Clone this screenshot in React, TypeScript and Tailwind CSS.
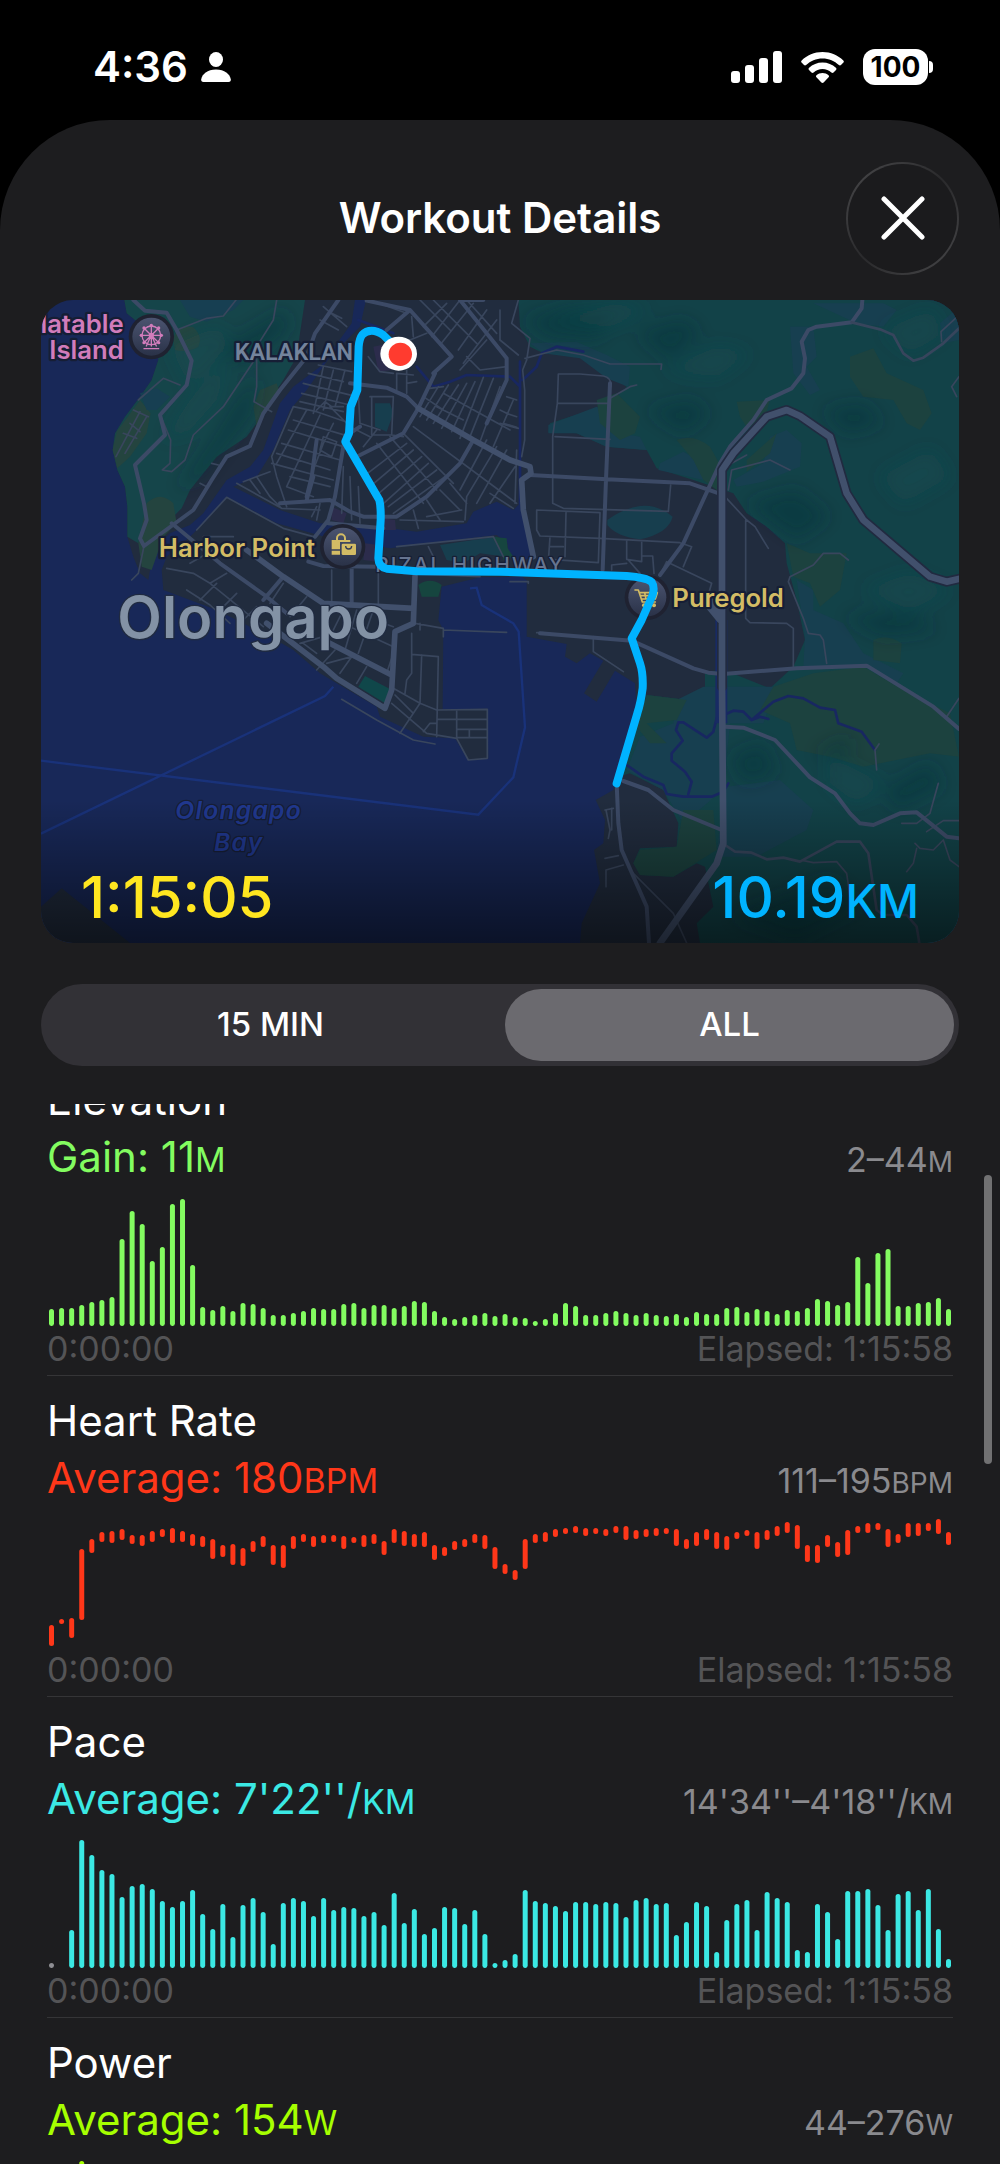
import React, { useState } from 'react'
import clsx from 'clsx'

type Bar = [top: number, bottom: number]

const CHART_HEIGHT = 128

const fromHeights = (heights: number[]): Bar[] => heights.map((h) => [CHART_HEIGHT - h, CHART_HEIGHT])

const elevation = fromHeights([
  17, 18, 18, 21, 24, 26, 29, 87, 115, 102, 65, 79, 122, 127, 61, 19, 16, 20, 15, 23, 22, 18, 11, 11, 13, 15, 18, 17,
  17, 22, 23, 18, 21, 21, 18, 20, 25, 24, 15, 9, 7, 9, 11, 13, 10, 12, 9, 8, 5, 7, 13, 23, 20, 11, 11, 13, 15, 13, 11,
  13, 11, 10, 12, 9, 14, 12, 12, 18, 19, 14, 17, 15, 12, 16, 15, 18, 27, 25, 21, 24, 69, 43, 73, 77, 20, 20, 23, 24,
  28, 17,
])

const heartRate: Bar[] = [
  [106, 127], [100, 105], [99, 119], [30, 101], [20, 34], [13, 23], [12, 24], [10, 21], [16, 25], [16, 27],
  [12, 23], [10, 18], [9, 24], [12, 23], [15, 27], [17, 28], [20, 40], [26, 38], [25, 46], [29, 47],
  [22, 33], [17, 28], [26, 46], [26, 49], [17, 30], [15, 23], [17, 28], [16, 24], [16, 23], [17, 30],
  [18, 24], [16, 28], [15, 25], [22, 36], [10, 24], [12, 27], [15, 28], [13, 28], [26, 41], [28, 37],
  [22, 31], [20, 28], [15, 24], [16, 30], [28, 50], [45, 55], [51, 61], [20, 50], [15, 24], [13, 23],
  [10, 18], [9, 15], [7, 14], [9, 17], [9, 15], [10, 17], [7, 14], [7, 21], [11, 20], [10, 18],
  [9, 17], [9, 15], [10, 27], [20, 30], [13, 27], [10, 21], [13, 30], [17, 31], [13, 20], [11, 17],
  [13, 30], [11, 21], [7, 17], [3, 14], [6, 30], [26, 43], [26, 44], [16, 28], [23, 38], [11, 36],
  [7, 14], [4, 14], [4, 11], [10, 28], [15, 24], [4, 18], [4, 17], [4, 12], [0, 15], [13, 26],
]

const pace = fromHeights([
  5, 0, 38, 128, 113, 98, 94, 71, 82, 84, 79, 67, 61, 67, 78, 54, 39, 64, 31, 63, 70, 56, 24, 65, 70, 67, 52, 70, 58,
  61, 60, 52, 56, 43, 75, 45, 59, 34, 40, 61, 60, 44, 58, 34, 5, 8, 14, 78, 67, 65, 62, 57, 66, 66, 64, 66, 65, 51,
  68, 70, 64, 65, 33, 46, 66, 62, 16, 48, 64, 68, 38, 76, 70, 66, 18, 16, 64, 56, 29, 77, 77, 79, 63, 38, 74, 77, 58,
  79, 39, 9,
])

const power = fromHeights([
  5, 0, 44, 128, 110, 96, 92, 74, 80, 82, 78, 66, 62, 66, 76, 56, 42, 62, 36, 62, 68, 56, 28, 64, 68, 66, 54, 68, 58,
  60, 60, 52, 56, 44, 72, 46, 58, 36, 42, 60, 60, 46, 58, 36, 6, 8, 16, 76, 66, 64, 62, 58, 66, 66, 64, 66, 64, 52,
  66, 68, 64, 64, 36, 48, 66, 62, 18, 48, 64, 66, 40, 74, 68, 66, 20, 18, 64, 56, 32, 76, 76, 78, 62, 40, 72, 76, 58,
  78, 40, 10,
])

const metrics = [
  { title: 'Elevation', label: 'Gain:', value: '11', unit: 'M', range: '2–44', text: 'text-[#83fc60]', stroke: 'stroke-[#83fc60]', bars: elevation },
  { title: 'Heart Rate', label: 'Average:', value: '180', unit: 'BPM', range: '111–195', text: 'text-[#ff3719]', stroke: 'stroke-[#ff3719]', bars: heartRate },
  { title: 'Pace', label: 'Average:', value: "7'22''/", unit: 'KM', range: "14'34''–4'18''/", text: 'text-[#3be9e4]', stroke: 'stroke-[#3be9e4]', bars: pace, mutedFirst: true },
  { title: 'Power', label: 'Average:', value: '154', unit: 'W', range: '44–276', text: 'text-[#a6ff00]', stroke: 'stroke-[#a6ff00]', bars: power, mutedFirst: true },
]

const StatusBar = () => (
  <div className="flex h-[120px] shrink-0 items-start justify-between pl-[93px] pr-[67px] pt-[40px]">
    <div className="flex h-[54px] items-center gap-[13px]">
      <span className="text-[42px] font-semibold leading-[54px]">4:36</span>
      <svg className="h-[30px] w-[30px]" viewBox="0 0 30 30" fill="currentColor">
        <ellipse cx="15" cy="7.5" rx="7" ry="7.5" />
        <path d="M2.5 30C.8 30 0 29 .2 27.500C1 22 6.500 17.500 15 17.500S29 22 29.800 27.500C30 29 29.200 30 27.500 30Z" />
      </svg>
    </div>
    <div className="flex h-[54px] items-center gap-[19px]">
      <svg className="h-[32px] w-[51px]" viewBox="0 0 51 32" fill="currentColor">
        <rect x="0" y="20" width="9" height="12" rx="3" />
        <rect x="14" y="14" width="9" height="18" rx="3" />
        <rect x="28" y="7" width="9" height="25" rx="3" />
        <rect x="42" y="0" width="9" height="32" rx="3" />
      </svg>
      <svg className="h-[31px] w-[43px]" viewBox="0 0 43 31" fill="currentColor">
        <path d="M21.500 0C29.700 0 37 3.200 42.300 8.400c.7.7.7 1.500.1 2.200l-2.400 2.500c-.6.6-1.500.6-2.100 0C33.600 9 27.900 6.500 21.500 6.500S9.400 9 5.100 13.100c-.6.6-1.500.6-2.100 0L.6 10.600c-.6-.7-.6-1.500.1-2.200C6 3.200 13.300 0 21.500 0Z" />
        <path d="M21.500 10.500c5.200 0 9.900 2 13.400 5.300.7.7.7 1.500.1 2.200l-2.500 2.500c-.6.6-1.400.6-2.100.1-2.400-2.200-5.500-3.500-8.900-3.500s-6.500 1.300-8.900 3.500c-.7.500-1.500.5-2.100-.1L8 18c-.6-.7-.6-1.500.1-2.200 3.500-3.300 8.200-5.300 13.400-5.300Z" />
        <path d="M21.500 21c2.300 0 4.400.8 6 2.200.7.6.7 1.400.1 2.100l-5 5.200c-.6.6-1.600.6-2.200 0l-5-5.200c-.6-.7-.6-1.500.1-2.100 1.600-1.400 3.700-2.200 6-2.200Z" />
      </svg>
      <div className="flex items-center gap-px">
        <div className="flex h-[36px] w-[65px] items-center justify-center rounded-[12px] bg-white text-[28px] font-bold text-black">
          100
        </div>
        <div className="h-[12px] w-[4px] rounded-r-full bg-white" />
      </div>
    </div>
  </div>
)

const Terrain = () => (
  <>
    {/* west headland and its hills */}
    <path className="fill-[#212c3e]" d="M283 30L290 70 340 110 380 160 385 210 365 270 330 320 285 380 255 430 248 480 262 540 285 590 292 650 292 740 310 800 330 850 355 870 362 830 360 790 420 730 480 705 520 670 590 570 660 530 700 480 750 340 790 290 870 230 965 100 975 30Z" />
    <path className="fill-[#15454a]" d="M283 30L290 70 340 110 380 160 385 210 365 270 330 320 285 380 255 430 248 480 262 540 285 590 292 650 292 740 325 760 345 700 420 690 455 655 480 600 560 500 650 440 680 400 720 330 760 270 800 200 810 130 825 30Z" />
    <path className="fill-[#24443f]" d="M330 330L362 370 350 430 300 500 262 535 248 480 260 425ZM350 640Q390 600 430 640L440 700 400 740 365 840 335 830 325 760ZM430 150Q440 100 490 112 520 140 505 170 470 190 435 180ZM690 300L740 280 750 310 700 370 680 410 670 350Z" />
    <path className="fill-[#173f52]" d="M330 310L380 295 420 320 380 360 350 360ZM450 30L640 30 610 60 530 95 480 80Z" />

    {/* downtown grid north of the river */}
    <path className="fill-[#212c3e]" d="M1008 30L990 110 900 200 830 300 780 360 730 480 680 560 610 590 750 660 870 700 1080 715 1160 725 1310 700 1330 665 1400 635 1450 660 1470 640 1490 700 1510 800 1430 830 1490 870 1490 1040 1610 1062 1605 1100 1640 1120 1680 1090 1720 1112 1662 1210 1700 1235 1755 1142 1815 1180 1820 1260 1750 1500 1697 1530 1725 1590 1720 1660 1692 1680 1710 1780 1655 1900 1650 1959 2787 1959 2787 30Z" />
    {/* south town and piers */}
    <path className="fill-[#212c3e]" d="M590 620L740 700 900 745 1080 775 1400 735 1432 760 1435 800 1500 830 1500 860 1350 862 1235 890 1225 990 1240 1020 1238 1258 1372 1256 1375 1405 1315 1410 1275 1345 1180 1340 1050 1280 1040 1250 920 1180 870 1150 790 1080 720 1040 560 960 400 900 395 840 410 800 480 740 530 690Z" />
    <path className="fill-[#212c3e]" d="M33 1850L95 1795 300 1959 33 1959Z" />
    <path className="fill-[#173e4e]" d="M1035 340L1080 340 1090 370 1070 425 1035 410ZM1230 765L1330 750 1400 740 1430 770 1425 800 1350 790 1300 820 1250 810Z" />
    <path className="fill-[#16453f]" d="M1165 885Q1200 860 1235 885L1225 920 1175 920ZM1385 740L1430 745 1435 795 1415 790ZM1410 745L1430 770 1450 800 1420 810Z" />
    <path className="fill-[#10474a]" d="M1005 1158L1080 1197 1065 1240 985 1190Z" />
    <path className="fill-[#2c2c4c]" d="M905 650L950 670 940 700 905 690ZM1060 685L1095 690 1098 720 1060 720ZM1005 760L1045 765 1040 815 1000 810ZM1030 170L1080 160 1085 240 1045 245Z" />

    {/* eastern hills */}
    <path className="fill-[#124248]" d="M1465 30L1470 110 1500 170 1540 190 1650 200 1790 290 1740 340 1700 355 1560 400 1555 425 1640 430 1730 470 1850 480 1880 535 1990 570 2110 610 2150 670 2210 710 2265 760 2270 820 2300 930 2325 1050 2290 1130 2220 1195 2120 1155 2080 1140 2025 1145 2025 1200 1975 1230 1850 1215 1830 1280 1765 1460 1800 1450 1900 1500 1945 1600 1940 1670 1830 1675 1810 1720 1830 1755 1930 1760 2000 1720 2025 1730 2050 1850 2000 1900 2010 1959 2787 1959 2787 30Z" />
    <path className="fill-[#173f50]" d="M1500 160L1640 155 1730 195 1800 230 1795 290 1730 265 1650 205 1540 190ZM1555 405L1700 350 1740 370 1770 430 1830 440 1850 480 1730 470 1640 430 1555 430ZM1890 520L1960 485 2020 520 2020 570 1885 540ZM2110 570L2200 520 2220 440 2270 420 2315 460 2310 530 2200 575 2120 590ZM2280 110L2350 110 2360 200 2330 230 2370 300 2340 315 2290 250ZM1940 1230L2020 1190 2240 1190 2200 1300 2100 1300 2060 1700 2180 1700 2330 1620 2350 1560 2250 1470 2090 1490 1960 1600 1900 1500 1790 1440 1830 1340 1930 1300ZM2300 870L2350 900 2350 960 2440 1000 2500 1090 2620 1150 2600 1180 2510 1130 2320 1130 2325 1040ZM2350 40L2560 40 2600 60 2560 110 2480 100ZM2730 100L2787 50 2787 150 2740 160Z" />
    <path className="fill-[#1c423f]" d="M1700 330L1760 310 1830 380 1815 430 1770 450 1710 400ZM1940 450Q1990 430 2040 470L2090 560 2060 600 2020 570 1990 510ZM2120 335L2220 330 2200 400 2150 410 2130 380ZM2150 510L2240 430 2220 490 2150 545ZM2460 200L2530 175 2570 250 2680 300 2705 370 2670 420 2630 400 2590 330 2500 320 2460 260ZM2270 760L2340 790 2450 790 2430 900 2370 950 2340 880 2290 860ZM2230 1190L2350 1150 2500 1130 2620 1200 2760 1270 2787 1400 2700 1390 2500 1430 2400 1400 2300 1380 2280 1300 2190 1260ZM1850 1215L1970 1230 1940 1290 1850 1300 1910 1360 1860 1360 1820 1310ZM1830 1680L1940 1670 1960 1560 2050 1560 2060 1680 1930 1760 1830 1755 1810 1720ZM2530 1050Q2570 1030 2615 1060L2610 1120 2530 1110Z" />
    <path className="fill-[#173e4e]" d="M1732 690Q1780 655 1830 648T1928 680Q1915 730 1830 748 1760 740 1732 705Z" />
    <g filter="url(#relief)">
      <path className="fill-[#0d3339]" fillOpacity=".4" d="M1480 90L1620 50 1760 70 1700 150 1560 140ZM1820 130L1960 90 2010 130 1920 210ZM1850 360L1980 330 2040 370 1960 430ZM2380 360L2500 340 2560 400 2450 430ZM2150 640L2300 600 2400 680 2300 750ZM2440 980L2640 960 2720 1020 2560 1040ZM2350 1390L2460 1340 2450 1410ZM2100 1400L2200 1360 2240 1450 2140 1480ZM2560 1500L2700 1420 2740 1490 2600 1560ZM560 430L640 300 690 260 660 380 520 560 440 600ZM560 180L760 60 780 110 640 230ZM2100 1880L2400 1760 2500 1850 2300 1950Z" />
      <path className="fill-[#175053]" fillOpacity=".35" d="M1560 90L1760 40 1860 60 1740 110ZM1900 240L2060 170 2160 190 2060 260ZM2550 560L2700 480 2760 560 2620 640ZM400 450L480 330 600 200 560 330 480 420ZM420 170L560 110 600 160 480 290ZM2500 900L2640 850 2760 900 2640 960ZM2400 1400L2560 1480 2480 1540 2400 1480ZM2560 120L2700 60 2740 130 2640 190Z" />
    </g>

    {/* rivers and canals */}
    <g fill="none" className="stroke-[#182761]" strokeWidth="8" strokeLinejoin="round" strokeLinecap="round">
      <path d="M1470 215V640M1478 270L1520 230 1535 190 1580 170 1660 185M985 90L1090 130M1160 230L1210 290 1260 275 1310 255 1440 260 1470 290" />
      <path d="M1790 1425L1840 1460 1900 1485 1910 1512 1960 1520 2045 1520 2080 1505 2095 1480M1975 1512L1985 1475 1965 1445 1925 1412V1390L1958 1352 1938 1320 1945 1297H1960L2030 1343 2050 1325 2060 1285 2110 1262 2140 1265 2165 1290 2230 1235 2275 1218 2320 1225 2370 1253 2415 1260 2425 1300 2495 1325 2535 1380M2165 1290L2190 1280 2215 1287" />
    </g>
    <path className="stroke-[#182b64]" strokeWidth="36" strokeLinejoin="round" fill="none" d="M2074 990V1300" />
  </>
)

const Roads = () => (
  <g fill="none" strokeLinejoin="round" strokeLinecap="round">
    <g className="stroke-[#39465d]" strokeWidth="5">
      {/* headland tracks */}
      <path d="M440 120L530 85 580 78 618 30M740 30L730 90 680 170 680 290 672 335 725 365M680 200L580 350 490 435 465 510 425 545 397 540 420 520 422 450 395 385M325 330L400 265 450 285M330 365L258 500M350 380L285 490M310 360L355 380M300 400L330 425M280 430L320 445M510 580L530 590M545 520L565 525M342 768L325 850 305 870" />
      {/* north of the river */}
      <path d="M880 50L950 110M905 70L935 85M870 90L925 120M835 250L940 275M820 280L980 320M815 310L960 345M810 335L940 365M880 230L850 370M910 240L880 360M945 240L915 350M865 225L965 245M790 350L725 500 740 560 770 650M790 350L860 365 960 400M830 360L740 520M870 375L770 590M900 350L960 410M860 360L885 335 905 350 940 350M790 390L960 440M775 420L940 470M755 460L930 510M740 490L900 540M725 520L910 570M780 560L900 590M770 590L850 620M910 400L880 460 850 540M880 440L920 455 905 500 870 480ZM640 575L720 545M620 580L755 655 870 660M680 560L720 620 750 650M660 570L690 610M860 650L845 680M870 640L860 690M940 530L935 670M960 560L965 690M985 590L990 700" />
      <path d="M1020 30L1130 70M1170 30L1260 120M1210 30L1340 160M1250 40L1180 110M1290 30L1205 140M1330 40L1230 165M1370 60L1285 180M1400 90L1300 220M1410 60V150M1310 30L1400 130M1145 80L1150 140M1190 130L1140 150M1290 240L1370 150M1310 200L1350 240 1430 230M1100 250V300M1130 240V310M1100 250L1150 255M1130 280L1160 275M1015 200L1050 245 1090 250M1020 320H1090L1085 435H1025V320M985 310L990 400 1050 420M1000 470L1040 420M960 410L1020 440M1085 435L1120 440M1200 295L1240 290M1180 320L1240 360M1225 290L1170 380M1255 285L1190 390M1285 285L1210 400M1310 280L1235 415M1335 275L1265 425M1360 262L1290 445M1390 265L1320 440M1410 290L1350 455M1450 330L1390 470M1240 310L1440 420M1220 350L1300 390M1430 370L1460 380M1420 400L1460 412M1150 410L1460 640M1130 460L1000 560M1150 480L1020 590M1175 500L1035 620M1195 520L1050 650M1220 540L1075 650M1245 560L1090 670M1040 460L1180 640M1080 440L1220 600M1120 430L1270 580M1400 470L1310 620M1430 480L1340 640M1455 530L1380 640M1370 450L1290 600M1310 620L1305 690M1260 580L1310 640M1230 600L1290 660M1190 630L1230 690M1150 660L1165 715M1110 690L1300 695M1295 660L1190 680M1460 480L1455 640M1380 610L1450 655" />
      {/* south town */}
      <path d="M500 720L590 622 760 715 850 740M410 835L490 850 540 880 700 1010M480 820L550 780M520 740H610M540 880L590 850M510 930L560 880M470 900L540 945 600 1000M560 970L620 910M620 1010L680 950M905 840V940M1045 840V950M1100 770L1390 740 1420 800M1195 770L1210 800M1120 850L1350 860M930 800L935 830M760 880L720 940M830 920L780 980M940 960L900 1040M980 960L945 1080M1030 960L985 1090M1060 1000L1090 1010M960 1010L1090 1070M820 1060L860 1090M880 1040L810 1060M915 1080L860 1140M965 1100L890 1120M965 1100L930 1150M1010 1130L980 1180M1090 1090L1070 1150M1145 1030V1150L1130 1170 1125 1210M1175 1095L1170 1240M1145 1093L1225 1100 1220 1340M1090 1195L1170 1240 1220 1260M1095 1215L1150 1270M1170 1240L1110 1330M1085 1240L1190 1330 1280 1345M1220 1260L1372 1258V1405L1315 1410 1280 1345V1260M1222 1288H1372M1280 1318H1372M1280 1343H1372M1318 1318V1343M1220 1300H1200L1180 1325M1155 1000L1240 1015M935 1228L1040 1290 1150 1350 1215 1362M1240 1020L1430 1027M1170 1000V1020M1240 1018V1040" />
      {/* east side blocks */}
      <path d="M1465 30L1445 100 1500 145 1490 210 1478 240 1484 300V450L1475 500M1485 205L1580 180 1660 195 1740 222 1895 222 1893 238M1410 150L1465 195M1585 252H1650L1720 258Q1745 262 1743 290M1585 252L1582 340 1568 440V640L1600 655 1915 664 1922 585M1582 340H1740M1575 440L1740 448M1740 325L1800 290 1820 285M1520 660L1710 668 1705 818 1560 808M1520 660V720L1530 738 1710 745 1950 758 1985 770 1960 830M1608 668L1605 800M1560 740L1556 800M1558 770H1600M1790 750V808L1835 815V755M1835 798H1868L1872 850M1745 840V825L1790 820M1795 810L1830 850M1890 855L1910 815 2045 880 2030 930M2065 615L2085 620 2150 690 2175 710 2215 775M2147 690V985L2160 998 2270 1000 2290 1015V1130M2095 600L2105 540 2220 510 2280 540M2105 520L2150 495M2455 810L2430 790H2380L2350 825 2280 860 2275 875 2320 985 2335 1030 2370 1035 2380 1050 2390 1120M2735 155L2733 125 2787 75M2787 260L2765 290 2780 320M1690 1040V1085L1780 1145M1430 320L1460 330M1410 360L1430 370M1410 400L1465 415M1540 1028H1520M1440 875H1495V880" />
      {/* southern trails */}
      <path d="M1800 1740L1930 1870 1970 1959M1725 1560L1750 1555M1728 1560L1740 1620 1735 1645M1745 1555V1620M1725 1705L1765 1697M1728 1790V1740L1780 1725M2320 1712L2350 1718 2420 1715 2450 1750 2460 1820M2750 1280L2787 1225M2725 1480L2700 1570 2660 1600 2615 1600M2690 1625L2740 1592H2787M2655 1660L2670 1675 2710 1680 2740 1650 2760 1710 2787 1730M2660 1675L2650 1720 2630 1745M2535 1380L2540 1440M2535 1380L2547 1362" />
    </g>
    <g className="stroke-[#3c4a66]" strokeWidth="12">
      <path d="M310 30L345 62 410 68 440 120 485 212 470 285 390 375 405 435 315 525 328 580 342 640 350 690 330 745 342 768 490 660 545 570 590 500 660 468 700 370 750 300 830 200 855 130 925 30" />
      <path d="M425 700L570 820 710 920 770 970M855 740L895 690 915 620 935 500 945 440 990 410M895 700L1060 715M750 640L900 630 960 665 1000 680 1100 680 1190 620 1290 520 1330 450M1130 320L1165 355 1120 430 980 500M960 280L1070 293 1130 320M835 815L880 828 1045 830M965 830V945M760 860L700 930M850 560L830 630M860 450L845 560 830 620" />
      <path d="M1210 250L1265 200 1140 60 1010 32M1140 60L1070 120M1360 30L1290 30 1430 205 1430 270 1370 400M1165 355L1215 250" />
      <path d="M1500 555L1730 568 1980 580 2060 608M1740 280L1728 568 1718 840M1890 855L1960 760 2070 520 2100 470 2170 390 2210 330 2285 295 2320 250 2325 205 2315 155 2335 120 2360 110 2465 97 2495 55 2497 30" />
      <path d="M1530 1030L1805 1052 1990 1135 2035 1148 2080 1152 2300 1135 2510 1127 2710 1250 2787 1317M2085 1310L2140 1313 2235 1350 2340 1462 2415 1510 2460 1570 2490 1600 2530 1605 2610 1570 2660 1567 2750 1640 2787 1645M1780 1473L1855 1500 1930 1560 2075 1620M1760 1480L1765 1600 1775 1680 1850 1850 1857 1959" />
    </g>
    <g className="stroke-[#37455c]" strokeWidth="8">
      <path d="M2465 97L2550 118 2590 135 2620 190 2650 212 2680 203 2740 160 2787 115M2085 1665L2115 1685 2165 1688 2210 1708 2260 1703 2310 1715 2420 1655 2490 1655 2515 1690 2540 1860 2560 1875 2630 1875 2660 1910 2668 1959" />
    </g>
    <g className="stroke-[#41506c]" strokeWidth="17">
      <path d="M1165 355L1330 450 1440 510 1500 530 1503 550 1475 570 1480 660 1510 800M650 780L760 860 880 940 1150 955M1155 860L1150 1000 1095 1025 1085 1200 1065 1255 920 1165 880 1130 710 1000M880 1050L1085 1155" />
      <path className="stroke-[#212a40]" strokeWidth="30" d="M2076 1190V540L2110 490 2210 380 2270 360 2310 378 2400 440 2450 610 2500 690 2700 860 2750 875 2795 865" />
      <path strokeWidth="20" d="M1890 1959L2060 1720 2080 1660 2076 1180V540L2110 490 2210 380 2270 360 2310 378 2400 440 2450 610 2500 690 2700 860 2750 875 2795 865M2025 935L2070 990M2045 935L2075 970" />
    </g>
  </g>
)

const Poi = ({ x, y, children }: { x: number; y: number; children: React.ReactNode }) => (
  <g transform={`translate(${x} ${y})`}>
    <circle r="68" className="fill-[#1f2231]" />
    <circle r="57" fill="url(#poi)" />
    {children}
  </g>
)

const RouteMap = () => (
  <svg
    className="block h-auto w-full"
    viewBox="33 30 2754 1929"
    role="img"
    aria-label="Workout route through Olongapo"
    fontFamily="Inter, sans-serif"
  >
    <defs>
      <filter id="relief">
        <feGaussianBlur stdDeviation="26" />
      </filter>
      <linearGradient id="poi" x1="0" y1="0" x2="0" y2="1">
        <stop offset="0" stopColor="#4b5470" />
        <stop offset="1" stopColor="#2a3248" />
      </linearGradient>
      <linearGradient id="fade" x1="0" y1="0" x2="0" y2="1">
        <stop offset="0" stopColor="#000" stopOpacity="0" />
        <stop offset="1" stopColor="#000" stopOpacity=".54" />
      </linearGradient>
    </defs>

    <rect x="33" y="30" width="2754" height="1929" className="fill-[#182858]" />
    <Terrain />
    <g fill="none" className="stroke-[#19327a]" strokeWidth="7">
      <path d="M33 1412L1345 1574 1450 1462 1485 1312 1466 1025 1450 1000 1380 960 1355 945 1340 893 1320 895M33 1631L885 1218 910 1190" />
    </g>
    <Roads />

    <g fontWeight="600" paintOrder="stroke" strokeLinejoin="round" className="stroke-[#161e35]" strokeWidth="14">
      <g fontSize="77" className="fill-[#d17cbb]" textAnchor="end">
        <text x="281" y="130">Inflatable</text>
        <text x="281" y="207">Island</text>
      </g>
      <g fontSize="77" className="fill-[#d3bc65]">
        <text x="855" y="801" textAnchor="end">Harbor Point</text>
        <text x="1927" y="950">Puregold</text>
      </g>
      <text x="614" y="210" fontSize="70" fontFamily="Roboto, sans-serif" className="fill-[#74849c]">
        KALAKLAN
      </text>
      <text x="1036" y="846" fontSize="62" fontWeight="500" className="fill-[#66748f] tracking-widest" strokeWidth="8">
        RIZAL HIGHWAY
      </text>
      <text x="262" y="1045" fontSize="174" className="fill-[#8392a5] stroke-[#202b41]" strokeWidth="8">
        Olongapo
      </text>
      <g fontSize="74" fontStyle="italic" textAnchor="middle" className="fill-[#20388f] tracking-wider" strokeWidth="8">
        <text x="626" y="1587">Olongapo</text>
        <text x="626" y="1683">Bay</text>
      </g>
    </g>

    <Poi x={364} y={140}>
      <g fill="none" className="stroke-[#d17cbb]" strokeWidth="4" strokeLinecap="round">
        <circle r="28" cy="-4" />
        <circle r="6" cy="-4" />
        <path d="M0-36V28M-32-4H32M-23-27L23 19M23-27L-23 19M-3 2L-15 28M3 2L15 28M-22 36H22" />
      </g>
      <g className="fill-[#d17cbb]">
        <circle cx="0" cy="-34" r="5" />
        <circle cx="-30" cy="-4" r="5" />
        <circle cx="30" cy="-4" r="5" />
        <circle cx="-22" cy="-26" r="5" />
        <circle cx="22" cy="-26" r="5" />
        <circle cx="-22" cy="18" r="5" />
        <circle cx="22" cy="18" r="5" />
      </g>
    </Poi>
    <Poi x={938} y={770}>
      <path fill="none" className="stroke-[#d3bc65]" strokeWidth="6" d="M-17-20V-25A12 12 0 0 1 7-25V-20" />
      <path className="fill-[#d3bc65]" d="M-33-20H23V-14H-8V8H-33ZM-33 12H-8V24H-33Z" />
      <rect x="-3" y="-9" width="43" height="34" rx="4" className="fill-[#d3bc65]" />
      <path fill="none" className="stroke-[#343c55]" strokeWidth="4" d="M9-2A9 9 0 0 0 27-2" />
    </Poi>
    <Poi x={1852} y={922}>
      <g fill="none" className="stroke-[#d3bc65]" strokeWidth="5" strokeLinejoin="round" strokeLinecap="round">
        <path d="M-37-22H-27L-15 14H24M-24-14H30L24 5H-17M-8-14L-4 5M8-14V5M22-14L14 5M-20-5H27" />
      </g>
      <circle cx="-10" cy="24" r="6" className="fill-[#d3bc65]" />
      <circle cx="20" cy="24" r="6" className="fill-[#d3bc65]" />
    </Poi>

    <rect x="33" y="1530" width="2754" height="429" fill="url(#fade)" />
    <path
      fill="none"
      className="stroke-[#00b3ff]"
      strokeWidth="24"
      strokeLinecap="round"
      strokeLinejoin="round"
      d="M1085 160L1060 135Q1042 122 1025 122T997 134Q988 145 986 170L982 300 962 350 957 430 946 455 962 482 1048 630Q1053 650 1052 690L1045 805Q1046 830 1070 836L1160 844 1410 845 1790 858Q1848 862 1865 876 1875 890 1868 915L1835 990 1805 1045 1830 1120Q1840 1150 1838 1195 1832 1240 1822 1270L1760 1480"
    />
    <ellipse cx="1106" cy="191" rx="55" ry="51" fill="#fff" />
    <circle cx="1111" cy="193" r="35" className="fill-[#ff3b2f]" />
  </svg>
)

const BarChart = ({ bars, stroke, mutedFirst }: { bars: Bar[]; stroke: string; mutedFirst?: boolean }) => {
  const step = (902 - 5) / (bars.length - 1)

  return (
    <div className="mt-[13px] px-[2px]">
      <svg
        className={clsx('block h-32 w-full', stroke)}
        viewBox={`0 0 902 ${CHART_HEIGHT}`}
        preserveAspectRatio="none"
        strokeWidth="5"
        strokeLinecap="round"
        aria-hidden="true"
      >
        {bars.map(([top, bottom], i) =>
          bottom > top ? (
            <path
              key={i}
              className={clsx(mutedFirst && i === 0 && 'stroke-[#8e8e93]')}
              d={`M${2.5 + i * step} ${top + 2.5}V${bottom - 2.49}`}
            />
          ) : null,
        )}
      </svg>
    </div>
  )
}

export default function App() {
  const [span, setSpan] = useState('ALL')

  return (
    <div className="flex h-screen flex-col overflow-hidden bg-black font-[Inter,sans-serif] text-white">
      <StatusBar />

      <main className="flex min-h-0 flex-1 flex-col rounded-t-[110px] bg-[#1d1d1f]">
        <header className="grid h-[180px] shrink-0 grid-cols-[1fr_auto_1fr] items-center px-[41px] pt-4">
          <h1 className="col-start-2 text-[42px] font-semibold leading-[56px]">Workout Details</h1>
          <button
            aria-label="Close"
            className="flex h-[113px] w-[113px] items-center justify-center justify-self-end rounded-full bg-gradient-to-br from-[#4a4a4c] via-[#2a2a2c] to-[#48484a] p-[2px]"
          >
            <span className="flex h-full w-full items-center justify-center rounded-full bg-[#1b1b1d]">
              <svg className="h-[44px] w-[44px]" viewBox="0 0 44 44" stroke="currentColor" strokeWidth="5" strokeLinecap="round">
                <path d="M3 3L41 41M41 3L3 41" />
              </svg>
            </span>
          </button>
        </header>

        <div className="relative mx-[41px] shrink-0 overflow-hidden rounded-[32px]">
          <RouteMap />
          <div className="absolute inset-x-[40px] bottom-[11px] flex items-baseline justify-between text-[58px] font-medium leading-[70px]">
            <span className="text-[#ffe620]">1:15:05</span>
            <span className="text-[#00b3ff]">
              10.19<span className="text-[46px] leading-none">KM</span>
            </span>
          </div>
        </div>

        <div className="mx-[41px] mt-[41px] grid h-[82px] shrink-0 grid-cols-2 gap-[10px] rounded-full bg-[#323136] p-[5px]">
          {['15 MIN', 'ALL'].map((option) => (
            <button
              key={option}
              onClick={() => setSpan(option)}
              aria-pressed={span === option}
              className={clsx('rounded-full text-[33px] font-medium', span === option && 'bg-[#6b6a6f]')}
            >
              {option}
            </button>
          ))}
        </div>

        <div className="relative mt-[38px] min-h-0 flex-1 overflow-hidden">
          {/* list sits scrolled part of the way into the first metric */}
          <div className="-mt-[49px] px-[47px]">
            {metrics.map(({ title, label, value, unit, range, text, stroke, bars, mutedFirst }) => (
              <section key={title} className="border-b border-[#353537] pb-[3px] pt-4">
                <h2 className="text-[42px] leading-[57px]">{title}</h2>
                <div className="flex items-baseline justify-between">
                  <p className={clsx('text-[42px] leading-[57px]', text)}>
                    {label} {value}
                    <span className="text-[34px] leading-none">{unit}</span>
                  </p>
                  <p className="text-[34px] leading-none text-[#8a8a8e]">
                    {range}
                    <span className="text-[28px]">{unit}</span>
                  </p>
                </div>
                <BarChart bars={bars} stroke={stroke} mutedFirst={mutedFirst} />
                <div className="flex justify-between text-[34px] leading-[46px] text-[#545456]">
                  <span>0:00:00</span>
                  <span>Elapsed: 1:15:58</span>
                </div>
              </section>
            ))}
          </div>
          <div className="absolute right-[8px] top-[71px] h-[289px] w-[8px] rounded-full bg-[#717172]" />
        </div>
      </main>
    </div>
  )
}
